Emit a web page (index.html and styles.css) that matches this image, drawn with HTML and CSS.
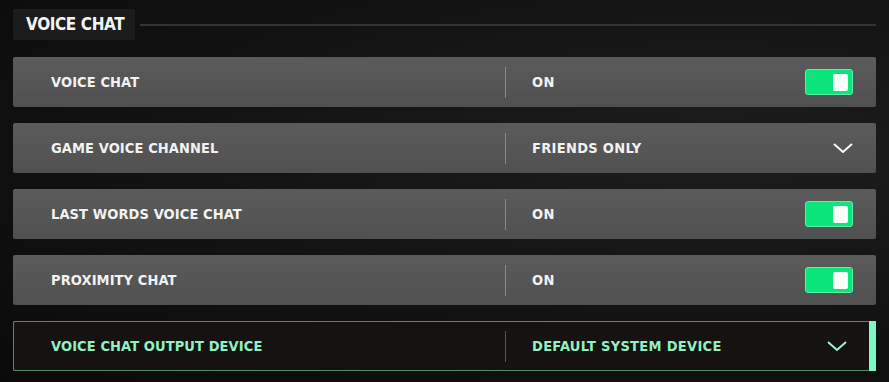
FILE: index.html
```html
<!DOCTYPE html>
<html>
<head>
<meta charset="utf-8">
<link rel="stylesheet" href="styles.css">
</head>
<body>
<div class="page">
  <div class="header">
    <div class="tab">VOICE CHAT</div>
    <div class="rule"></div>
  </div>
  <div class="list">
    <div class="row">
      <div class="label">VOICE CHAT</div>
      <div class="divider"></div>
      <div class="value">ON</div>
      <div class="toggle"><div class="knob"></div></div>
    </div>
    <div class="row">
      <div class="label">GAME VOICE CHANNEL</div>
      <div class="divider"></div>
      <div class="value">FRIENDS ONLY</div>
      <svg class="chev" width="22" height="12" viewBox="0 0 22 12"><path d="M2 2 L11 10 L20 2" fill="none" stroke="#fff" stroke-width="2"/></svg>
    </div>
    <div class="row">
      <div class="label">LAST WORDS VOICE CHAT</div>
      <div class="divider"></div>
      <div class="value">ON</div>
      <div class="toggle"><div class="knob"></div></div>
    </div>
    <div class="row">
      <div class="label">PROXIMITY CHAT</div>
      <div class="divider"></div>
      <div class="value">ON</div>
      <div class="toggle"><div class="knob"></div></div>
    </div>
    <div class="row active">
      <div class="label">VOICE CHAT OUTPUT DEVICE</div>
      <div class="divider"></div>
      <div class="value">DEFAULT SYSTEM DEVICE</div>
      <svg class="chev" width="22" height="12" viewBox="0 0 22 12"><path d="M2 2 L11 10 L20 2" fill="none" stroke="#9ff5cf" stroke-width="2"/></svg>
      <div class="accent"></div>
    </div>
  </div>
</div>
</body>
</html>
```

FILE: styles.css
```css
html, body {
  margin: 0;
  padding: 0;
}
body {
  width: 889px;
  height: 382px;
  overflow: hidden;
  background: radial-gradient(ellipse at 80% 40%, #1d1d1d 0%, #121212 55%, #0a0a0a 100%);
  font-family: "DejaVu Sans Condensed", "DejaVu Sans", sans-serif;
  font-weight: bold;
  color: #f2f2f2;
}
.page {
  padding: 9px 13px 0 13px;
}
.header {
  display: flex;
  align-items: center;
  height: 31px;
}
.tab {
  width: 122px;
  height: 31px;
  box-sizing: border-box;
  background: #1c1c1c;
  border-radius: 2px;
  padding-left: 13px;
  font-size: 17px;
  line-height: 31px;
  letter-spacing: -0.4px;
  color: #f4f4f4;
}
.rule {
  flex: 1;
  height: 2px;
  margin-left: 5px;
  background: #333;
}
.list {
  margin-top: 17px;
  display: flex;
  flex-direction: column;
  gap: 16px;
}
.row {
  position: relative;
  height: 50px;
  box-sizing: border-box;
  display: flex;
  align-items: center;
  background: linear-gradient(180deg, #5b5b5b 0%, #505050 100%);
  border-radius: 2px;
}
.label {
  width: 492px;
  padding-left: 38px;
  box-sizing: border-box;
  font-size: 14.5px;
  letter-spacing: 0.1px;
}
.divider {
  width: 1px;
  height: 31px;
  background: #8a8a8a;
}
.value {
  flex: 1;
  padding-left: 26px;
  font-size: 14.5px;
  letter-spacing: 0.3px;
}
.toggle {
  width: 48px;
  height: 26px;
  box-sizing: border-box;
  background: #0ce57c;
  border: 1px solid #58f2a6;
  border-radius: 3px;
  margin-right: 23px;
  display: flex;
  align-items: center;
  justify-content: flex-end;
  padding-right: 4px;
}
.knob {
  width: 15px;
  height: 17px;
  background: #fafffc;
  border-radius: 2px;
}
.chev {
  margin-right: 22px;
}
.row.active {
  background: #141311;
  border: 1px solid #4f8a6c;
  border-right: none;
}
.row.active .label,
.row.active .value {
  color: #92f0c3;
}
.row.active .label {
  padding-left: 37px;
  width: 491px;
}
.row.active .chev {
  margin-right: 21px;
}
.accent {
  width: 7px;
  align-self: stretch;
  background: #7cf7c4;
  margin-top: -1px;
  margin-bottom: -1px;
}
.row.active .divider {
  background: #555;
}
```
